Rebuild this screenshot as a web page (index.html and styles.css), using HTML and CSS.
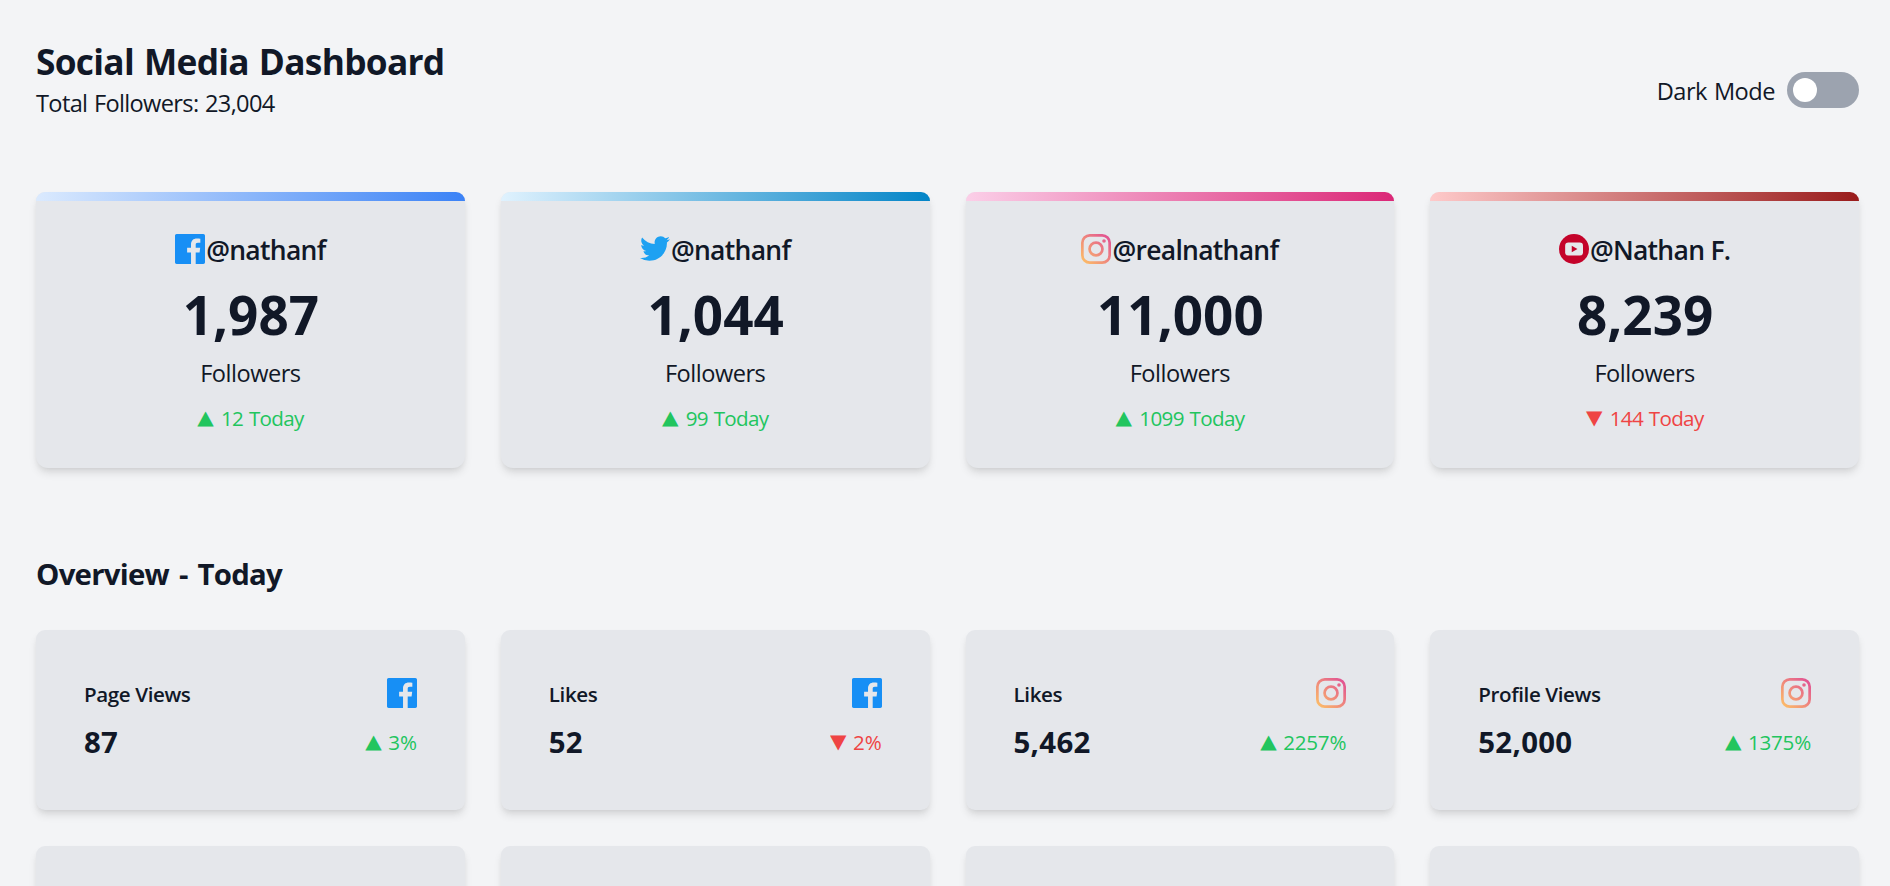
FILE: index.html
```html
<!DOCTYPE html>
<html lang="en">
<head>
<meta charset="utf-8">
<title>Social Media Dashboard</title>
<link rel="stylesheet" href="styles.css">
</head>
<body>
<svg class="sprite" width="0" height="0" aria-hidden="true">
  <defs>
    <linearGradient id="ig" x1="20" y1="0" x2="0" y2="20" gradientUnits="userSpaceOnUse">
      <stop offset="0" stop-color="#df4896"/><stop offset="1" stop-color="#fec564"/>
    </linearGradient>
    <symbol id="facebook" viewBox="0 0 20 20"><path fill="#178ff5" d="M18.896 0H1.104C.494 0 0 .494 0 1.104v17.793C0 19.506.494 20 1.104 20h9.58v-7.745H8.076V9.237h2.606V7.01c0-2.583 1.578-3.99 3.883-3.99 1.104 0 2.052.082 2.329.119v2.7h-1.598c-1.254 0-1.496.597-1.496 1.47v1.928h2.989l-.39 3.018h-2.6V20h5.098c.608 0 1.102-.494 1.102-1.104V1.104C20 .494 19.506 0 18.896 0z"/></symbol>
    <symbol id="twitter" viewBox="0 0 20 17"><path fill="#1da1f2" d="M20 2.172a8.192 8.192 0 01-2.357.646 4.11 4.11 0 001.804-2.27 8.22 8.22 0 01-2.605.996A4.096 4.096 0 0013.847.248c-2.65 0-4.596 2.472-3.998 5.037A11.648 11.648 0 011.392.998a4.109 4.109 0 001.27 5.478 4.086 4.086 0 01-1.858-.513c-.045 1.9 1.318 3.679 3.291 4.075a4.113 4.113 0 01-1.853.07 4.106 4.106 0 003.833 2.849A8.25 8.25 0 010 14.658a11.616 11.616 0 006.29 1.843c7.618 0 11.922-6.434 11.663-12.205A8.354 8.354 0 0020 2.172z"/></symbol>
    <symbol id="instagram" viewBox="0 0 20 20"><g fill="none" stroke="url(#ig)" stroke-width="1.8"><rect x=".9" y=".9" width="18.2" height="18.2" rx="5"/><circle cx="10" cy="10" r="4.3"/></g><circle cx="15.34" cy="4.66" r="1.2" fill="url(#ig)"/></symbol>
    <symbol id="youtube" viewBox="0 0 20 20"><circle cx="10" cy="10" r="10" fill="#c4032a"/><rect x="4.1" y="5.6" width="11.9" height="8.8" rx="2.2" fill="#e5e7eb"/><path fill="#c4032a" d="M8.5 7.9l3.8 2.1-3.8 2.1z"/></symbol>
  </defs>
</svg>
<main class="page">
  <header class="header">
    <div>
      <h1 class="title">Social Media Dashboard</h1>
      <p class="total">Total Followers: 23,004</p>
    </div>
    <div class="mode">
      <span class="mode-label">Dark Mode</span>
      <span class="toggle"><span class="knob"></span></span>
    </div>
  </header>

  <section class="grid">
    <article class="card facebook">
      <div class="handle"><svg class="icon"><use href="#facebook"/></svg><span class="user">@nathanf</span></div>
      <div class="count">1,987</div>
      <div class="label">Followers</div>
      <div class="change up"><span class="arrow">▲</span><span class="today">12 Today</span></div>
    </article>
    <article class="card twitter">
      <div class="handle"><svg class="icon bird"><use href="#twitter"/></svg><span class="user">@nathanf</span></div>
      <div class="count">1,044</div>
      <div class="label">Followers</div>
      <div class="change up"><span class="arrow">▲</span><span class="today">99 Today</span></div>
    </article>
    <article class="card instagram">
      <div class="handle"><svg class="icon"><use href="#instagram"/></svg><span class="user">@realnathanf</span></div>
      <div class="count">11,000</div>
      <div class="label">Followers</div>
      <div class="change up"><span class="arrow">▲</span><span class="today">1099 Today</span></div>
    </article>
    <article class="card youtube">
      <div class="handle"><svg class="icon"><use href="#youtube"/></svg><span class="user">@Nathan F.</span></div>
      <div class="count">8,239</div>
      <div class="label">Followers</div>
      <div class="change down"><span class="arrow">▼</span><span class="today">144 Today</span></div>
    </article>
  </section>

  <h2 class="subtitle">Overview - Today</h2>

  <section class="grid">
    <article class="stat">
      <div class="row"><span class="name">Page Views</span><svg class="icon"><use href="#facebook"/></svg></div>
      <div class="row"><span class="value">87</span><span class="change up"><span class="arrow">▲</span><span class="percent">3%</span></span></div>
    </article>
    <article class="stat">
      <div class="row"><span class="name">Likes</span><svg class="icon"><use href="#facebook"/></svg></div>
      <div class="row"><span class="value">52</span><span class="change down"><span class="arrow">▼</span><span class="percent">2%</span></span></div>
    </article>
    <article class="stat">
      <div class="row"><span class="name">Likes</span><svg class="icon"><use href="#instagram"/></svg></div>
      <div class="row"><span class="value">5,462</span><span class="change up"><span class="arrow">▲</span><span class="percent">2257%</span></span></div>
    </article>
    <article class="stat">
      <div class="row"><span class="name">Profile Views</span><svg class="icon"><use href="#instagram"/></svg></div>
      <div class="row"><span class="value">52,000</span><span class="change up"><span class="arrow">▲</span><span class="percent">1375%</span></span></div>
    </article>
    <article class="stat"></article>
    <article class="stat"></article>
    <article class="stat"></article>
    <article class="stat"></article>
  </section>
</main>
</body>
</html>
```
FILE: styles.css
```css
* { box-sizing: border-box; }
body {
  margin: 0;
  background: #f3f4f6;
  color: #111827;
  font-family: "Segoe UI", "Open Sans", "Noto Sans", sans-serif;
}
h1, h2, p { margin: 0; }
.sprite { position: absolute; }
.page { height: 886px; overflow: hidden; padding: 37px 31px 0 36px; }
.header { display: flex; justify-content: space-between; align-items: center; height: 84px; margin-bottom: 71px; }
.title { font-size: 35.3px; line-height: 48px; font-weight: 700; letter-spacing: -.72px; word-spacing: 1.5px; white-space: nowrap; }
.total { font-size: 23.6px; line-height: 36px; letter-spacing: -.65px; word-spacing: 1px; }
.mode { display: flex; align-items: center; gap: 12px; padding-top: 22px; }
.mode-label { padding-top: 2px; font-size: 23.6px; line-height: 36px; letter-spacing: -.5px; word-spacing: 1.3px; }
.toggle { display: flex; align-items: center; width: 72px; height: 36px; padding: 6px; border-radius: 18px; background: #9ca3af; }
.knob { width: 24px; height: 24px; border-radius: 50%; background: #fff; }

.grid { display: grid; grid-template-columns: repeat(4, minmax(0, 1fr)); gap: 36px; }
.card, .stat {
  background: #e5e7eb;
  box-shadow: 0 6px 9px -1.5px rgba(0, 0, 0, .1), 0 3px 6px -3px rgba(0, 0, 0, .1);
}
.card { height: 276px; border-radius: 9px 9px 12px 12px; overflow: hidden; text-align: center; }
.card::before { content: ""; display: block; height: 9px; margin-bottom: 27px; }
.facebook::before { background: linear-gradient(to right, #dbeafe, #3b82f6); }
.twitter::before { background: linear-gradient(to right, #e0f2fe, #0284c7); }
.instagram::before { background: linear-gradient(to right, #fbcfe8, #db2777); }
.youtube::before { background: linear-gradient(to right, #fecaca, #991b1b); }
.icon { display: block; width: 30px; height: 30px; flex: none; }
.bird { height: 25.5px; }
.handle { display: flex; justify-content: center; align-items: center; gap: 1px; height: 42px; font-size: 26.5px; line-height: 42px; font-weight: 600; }
.user { padding-top: 2px; letter-spacing: -.72px; }
.count { margin-top: 15px; padding-left: 1px; font-size: 53px; line-height: 60px; font-weight: 700; }
.label { margin-top: 10px; font-size: 23.6px; line-height: 36px; letter-spacing: -.5px; }
.change { display: flex; justify-content: center; align-items: center; font-size: 20.6px; line-height: 30px; }
.card .change { margin-top: 12px; }
.arrow { width: 17px; margin-right: 7px; font-family: "DejaVu Sans", sans-serif; font-size: 21.5px; transform: scaleY(.9); }
.today { letter-spacing: -.65px; word-spacing: 1px; }
.up { color: #22c55e; }
.down { color: #ef4444; }

.subtitle { margin: 85px 0 35px; font-size: 29.4px; line-height: 42px; font-weight: 700; letter-spacing: -.75px; word-spacing: 3px; }
.stat { display: flex; flex-direction: column; gap: 12px; height: 180px; padding: 48px; border-radius: 9px; }
.row { display: flex; justify-content: space-between; align-items: center; }
.row:first-child { height: 30px; }
.row:last-child { height: 42px; }
.name { padding-top: 2px; font-size: 20.6px; line-height: 30px; font-weight: 600; letter-spacing: -.4px; }
.value { padding-top: 2px; font-size: 29.4px; line-height: 42px; font-weight: 700; letter-spacing: .3px; }
.row .change { padding-top: 1px; }
.row .arrow { margin-right: 6px; }
.percent { letter-spacing: -.2px; }
```
